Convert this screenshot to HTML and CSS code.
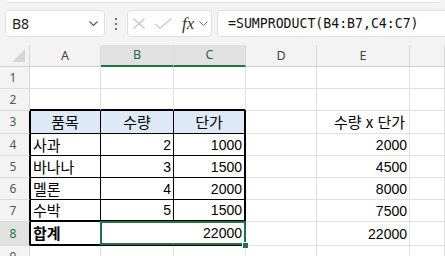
FILE: index.html
```html
<!DOCTYPE html>
<html lang="ko">
<head>
    <meta charset="UTF-8">
    <meta name="viewport" content="width=device-width, initial-scale=1.0">
    <title>SUMPRODUCT</title>
    <link rel="stylesheet" href="styles.css">
</head>
<body>
    <div class="ribbon-edge"></div>

    <div class="formula-bar">
        <div class="name-box">
            <span>B8</span>
            <svg width="9" height="5" viewBox="0 0 9 5"><path d="M0.5 0.5 L4.5 4.5 L8.5 0.5" fill="none" stroke="#555" stroke-width="1.1"/></svg>
        </div>
        <div class="more-dots"><i></i><i></i><i></i></div>
        <div class="fx-box">
            <svg class="icon-x" width="12" height="11" viewBox="0 0 12 11"><path d="M0.5 0.5 L11.5 10.5 M11.5 0.5 L0.5 10.5" fill="none" stroke="#c3c3c3" stroke-width="1.1"/></svg>
            <svg class="icon-check" width="17" height="11" viewBox="0 0 17 11"><path d="M0.5 6 L4.8 10.3 L16.5 0.5" fill="none" stroke="#c3c3c3" stroke-width="1.1"/></svg>
            <span class="fx">fx</span>
            <svg width="9" height="5" viewBox="0 0 9 5"><path d="M0.5 0.5 L4.5 4.5 L8.5 0.5" fill="none" stroke="#777" stroke-width="1"/></svg>
        </div>
        <div class="formula-input">=SUMPRODUCT(B4:B7,C4:C7)</div>
    </div>

    <div class="sheet">
        <!-- column headers -->
        <div class="corner"><span class="tri"></span></div>
        <div class="ch">A</div>
        <div class="ch sel">B</div>
        <div class="ch sel">C</div>
        <div class="ch">D</div>
        <div class="ch">E</div>
        <div class="ch"></div>

        <!-- row 1 -->
        <div class="rh">1</div>
        <div></div><div></div><div></div><div></div><div></div><div></div>

        <!-- row 2 -->
        <div class="rh">2</div>
        <div class="above"></div><div class="above"></div><div class="above"></div>
        <div></div><div></div><div></div>

        <!-- row 3 -->
        <div class="rh edge">3</div>
        <div class="t l hd">품목</div>
        <div class="t hd">수량</div>
        <div class="t r hd">단가</div>
        <div></div>
        <div class="right">수량 x 단가</div>
        <div></div>

        <!-- row 4 -->
        <div class="rh edge">4</div>
        <div class="t l">사과</div>
        <div class="t n">2</div>
        <div class="t r n">1000</div>
        <div></div>
        <div class="n">2000</div>
        <div></div>

        <!-- row 5 -->
        <div class="rh edge">5</div>
        <div class="t l">바나나</div>
        <div class="t n">3</div>
        <div class="t r n">1500</div>
        <div></div>
        <div class="n">4500</div>
        <div></div>

        <!-- row 6 -->
        <div class="rh edge">6</div>
        <div class="t l">멜론</div>
        <div class="t n">4</div>
        <div class="t r n">2000</div>
        <div></div>
        <div class="n">8000</div>
        <div></div>

        <!-- row 7 -->
        <div class="rh edge">7</div>
        <div class="t l pre">수박</div>
        <div class="t n pre">5</div>
        <div class="t r n pre">1500</div>
        <div></div>
        <div class="n">7500</div>
        <div></div>

        <!-- row 8 -->
        <div class="rh edge sel">8</div>
        <div class="t l last bold">합계</div>
        <div class="t r n last total">22000<span class="fill-handle"></span></div>
        <div></div>
        <div class="n">22000</div>
        <div></div>

        <!-- row 9 -->
        <div class="rh">9</div>
        <div></div><div></div><div></div><div></div><div></div><div></div>
    </div>
</body>
</html>
```

FILE: styles.css
```css
body {
    margin: 0;
    height: 256px;
    overflow: hidden;
    background-color: #f3f3f3;
    font-family: "Noto Sans", sans-serif;
}
.ribbon-edge {
    height: 2px;
    margin: 0 5px;
    background: #fff;
    border-bottom: 1px solid #e3e3e3;
    border-radius: 0 0 5px 5px;
}
.formula-bar {
    display: flex;
    align-items: center;
    height: 27px;
    margin-top: 7px;
    padding-left: 5px;
}
.name-box {
    box-sizing: border-box;
    width: 100px;
    height: 27px;
    display: flex;
    align-items: center;
    justify-content: space-between;
    padding: 0 6px 0 6px;
    background: #fff;
    border: 1px solid #e0e0e0;
    border-radius: 4px;
    font-size: 14px;
    color: #222;
}
.more-dots {
    display: flex;
    flex-direction: column;
    gap: 3px;
    margin: 0 10px;
}
.more-dots i {
    display: block;
    width: 2px;
    height: 2px;
    border-radius: 1px;
    background: #444;
}
.fx-box {
    box-sizing: border-box;
    width: 85px;
    height: 27px;
    display: flex;
    align-items: center;
    padding-left: 5px;
    margin-right: 5px;
    background: #fff;
    border: 1px solid #e0e0e0;
    border-radius: 4px;
}
.icon-check {
    margin-left: 10px;
}
.fx {
    margin: 0 5px 0 10px;
    font-family: "Liberation Serif", serif;
    font-style: italic;
    font-size: 17px;
    color: #333;
    line-height: 1;
}
.formula-input {
    box-sizing: border-box;
    flex: 1;
    height: 27px;
    display: flex;
    align-items: center;
    padding-left: 10px;
    background: #fff;
    border: 1px solid #e0e0e0;
    border-right: none;
    border-radius: 4px 0 0 4px;
    font-family: "DejaVu Sans Mono", monospace;
    font-size: 13.2px;
    color: #111;
    white-space: nowrap;
}
.sheet {
    display: grid;
    grid-template-columns: 30px 71px 73px 72px 71px 93px 1fr;
    grid-template-rows: 22px 22px 22px 23px 22px 22px 22px 22px 24px 22px;
    margin-top: 8px;
    background: #fff;
}
.sheet > div {
    box-sizing: border-box;
    display: flex;
    align-items: center;
    padding: 0 3px;
    border-right: 1px solid #e1e1e1;
    border-bottom: 1px solid #e1e1e1;
    font-family: "Noto Sans CJK KR", sans-serif;
    font-size: 15px;
    line-height: 20px;
    color: #000;
    white-space: nowrap;
    overflow: hidden;
}
.sheet > .corner {
    justify-content: flex-end;
    align-items: flex-end;
    padding: 0 4px 4px 0;
    background: #f3f3f3;
    border-right-color: #d6d6d6;
    border-bottom-color: #cfcfcf;
}
.tri {
    width: 0;
    height: 0;
    border-left: 13px solid transparent;
    border-bottom: 13px solid #d6d6d6;
}
.sheet > .ch {
    justify-content: center;
    background: #f3f3f3;
    border-right-color: #d9d9d9;
    border-bottom-color: #cfcfcf;
    font-family: "Noto Sans", sans-serif;
    font-size: 12.5px;
    color: #444;
}
.sheet > .ch.sel {
    background: #e1e1e1;
    color: #1e6b41;
    border-bottom: 2px solid #217346;
}
.sheet > .rh {
    justify-content: center;
    padding: 0 3px 0 0;
    background: #f3f3f3;
    border-right-color: #d6d6d6;
    border-bottom-color: #dcdcdc;
    font-family: "Noto Sans", sans-serif;
    font-size: 12px;
    color: #555;
}
.sheet > .rh.edge {
    border-right-color: #000;
}
.sheet > .rh.sel {
    background: #e1e1e1;
    color: #217346;
}
.sheet > .above {
    border-bottom: 2px solid #000;
}
.sheet > .t {
    border-right-color: #000;
    border-bottom-color: #000;
}
.sheet > .l {
    border-left: 1px solid #000;
    padding-left: 2px;
}
.sheet > .r {
    border-right-width: 2px;
}
.sheet > .hd {
    justify-content: center;
    background: #dde9f6;
}
.sheet > .pre,
.sheet > .last {
    border-bottom-width: 2px;
}
.sheet > .bold {
    font-weight: bold;
}
.sheet > .n {
    justify-content: flex-end;
    padding-right: 2px;
    font-family: "Liberation Sans", sans-serif;
    font-size: 14px;
}
.sheet > .right {
    justify-content: flex-end;
    padding-right: 4px;
}
.sheet > .total {
    grid-column: span 2;
    position: relative;
    overflow: visible;
}
.total::after {
    content: "";
    position: absolute;
    left: -1px;
    top: -1px;
    right: -2px;
    bottom: -1px;
    border: 2px solid #217346;
    z-index: 1;
}
.fill-handle {
    position: absolute;
    right: -5px;
    bottom: -5px;
    width: 5px;
    height: 5px;
    background: #217346;
    border: 1px solid #fff;
    z-index: 2;
}
```
